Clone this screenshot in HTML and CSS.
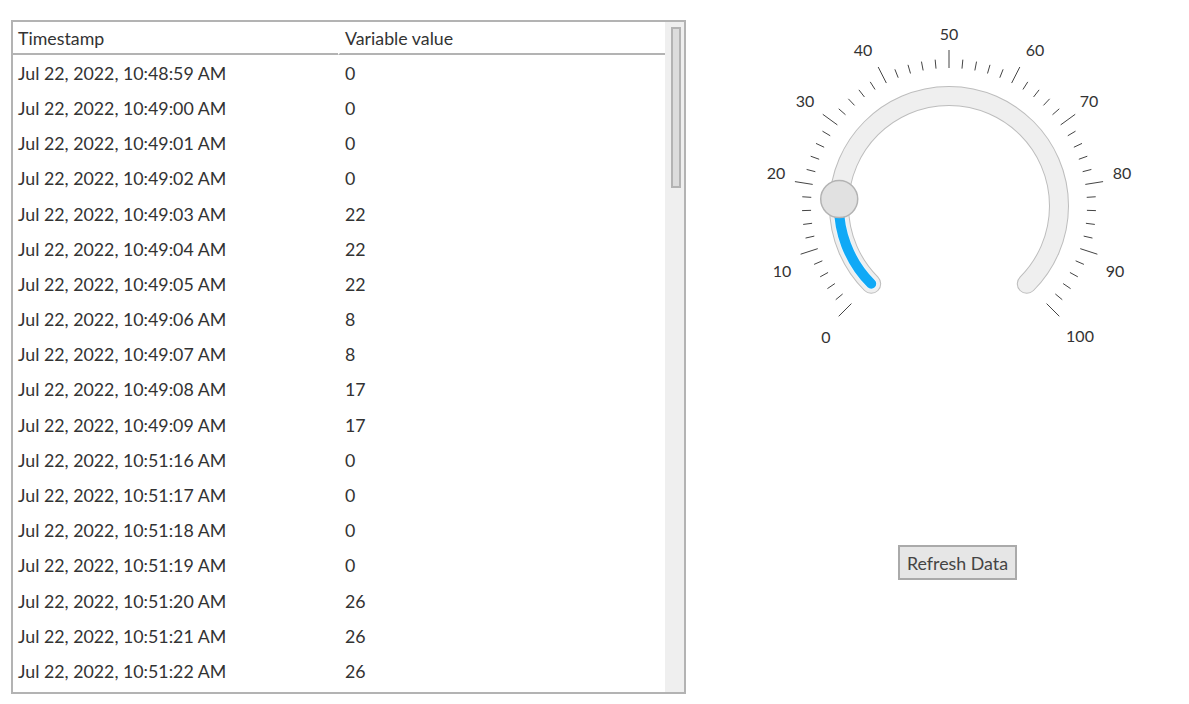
FILE: index.html
```html
<!DOCTYPE html>
<html lang="en">
<head>
    <meta charset="UTF-8">
    <meta name="viewport" content="width=device-width, initial-scale=1.0">
    <title>Variable monitor</title>
    <link rel="stylesheet" href="styles.css">
</head>
<body>
    <div class="page">
        <!-- history table -->
        <div class="table-panel">
            <div class="table-scroll">
                <table class="data-table">
                    <thead>
                        <tr>
                            <th class="col-time">Timestamp</th>
                            <th class="col-value">Variable value</th>
                        </tr>
                    </thead>
                    <tbody id="rows"></tbody>
                </table>
            </div>
            <!-- scrollbar -->
            <div class="scrollbar">
                <div class="scroll-thumb"></div>
            </div>
        </div>

        <!-- gauge + button -->
        <div class="gauge-panel">
            <svg class="gauge" id="gauge" width="400" height="340" viewBox="0 0 400 340"></svg>
            <button class="refresh-btn" type="button">Refresh Data</button>
        </div>
    </div>

    <script>
        (function() {
            // table data
            var rows = [
                ['10:48:59', 0], ['10:49:00', 0], ['10:49:01', 0], ['10:49:02', 0],
                ['10:49:03', 22], ['10:49:04', 22], ['10:49:05', 22], ['10:49:06', 8],
                ['10:49:07', 8], ['10:49:08', 17], ['10:49:09', 17], ['10:51:16', 0],
                ['10:51:17', 0], ['10:51:18', 0], ['10:51:19', 0], ['10:51:20', 26],
                ['10:51:21', 26], ['10:51:22', 26]
            ];

            var html = '';
            rows.forEach(function(row) {
                html += '<tr><td>Jul 22, 2022, ' + row[0] + ' AM</td><td>' + row[1] + '</td></tr>';
            });
            document.getElementById('rows').innerHTML = html;

            // gauge drawing
            var svg = document.getElementById('gauge');
            var cx = 200, cy = 186;
            var value = 18;
            // label positions (centre of text)
            var labels = {
                0: [77, 316], 10: [33, 250], 20: [27, 152], 30: [56, 80],
                40: [114, 29], 50: [200, 13], 60: [286, 29], 70: [340, 80],
                80: [373, 152], 90: [366, 250], 100: [331, 315]
            };

            function pt(r, v) {
                var a = (-135 + v * 2.7) * Math.PI / 180;
                return [cx + r * Math.sin(a), cy - r * Math.cos(a)];
            }
            function arc(r, from, to) {
                var p1 = pt(r, from), p2 = pt(r, to);
                var large = (to - from) * 2.7 > 180 ? 1 : 0;
                return 'M' + p1[0].toFixed(2) + ' ' + p1[1].toFixed(2) +
                       ' A' + r + ' ' + r + ' 0 ' + large + ' 1 ' + p2[0].toFixed(2) + ' ' + p2[1].toFixed(2);
            }

            var out = '';
            // ticks
            for (var v = 0; v <= 100; v += 2) {
                var major = v % 10 === 0;
                var a = pt(138, v), b = pt(major ? 156 : 147, v);
                out += '<line class="tick" x1="' + a[0] + '" y1="' + a[1] + '" x2="' + b[0] + '" y2="' + b[1] + '"/>';
                if (major) {
                    out += '<text class="tick-label" x="' + labels[v][0] + '" y="' + labels[v][1] + '">' + v + '</text>';
                }
            }
            // track
            var track = arc(110, 0, 100);
            out += '<path class="track-edge" d="' + track + '"/>';
            out += '<path class="track" d="' + track + '"/>';
            // value bar
            var bar = arc(110, 0, value);
            out += '<path class="bar-edge" d="' + bar + '"/>';
            out += '<path class="bar" d="' + bar + '"/>';
            // knob
            var k = pt(110, value);
            out += '<circle class="knob" cx="' + k[0] + '" cy="' + k[1] + '" r="18.5"/>';

            svg.innerHTML = out;
        })();
    </script>
</body>
</html>
```

FILE: styles.css
```css
* {
    margin: 0;
    padding: 0;
    box-sizing: border-box;
}
body {
    font-family: Lato, "Open Sans", sans-serif;
    font-size: 17.8px;
    line-height: 21.2px;
    color: #333;
    background: #fff;
}

.page {
    display: flex;
    align-items: flex-start;
    padding: 20px 0 0 11px;
}

/* table */
.table-panel {
    flex: 0 0 auto;
    display: flex;
    width: 675px;
    height: 674px;
    border: 2px solid #b3b3b3;
}
.table-scroll {
    flex: 1;
    overflow: hidden;
}
.scrollbar {
    flex: 0 0 19px;
    padding: 5px 3px 0 6px;
    background: #efefef;
}
.scroll-thumb {
    height: 161px;
    background: #dcdcdc;
    border: 2px solid #b3b3b3;
}
.data-table {
    width: 100%;
    border-collapse: separate;
    border-spacing: 0;
}
.data-table th {
    padding: 5.8px 5px 4.2px;
    font-weight: normal;
    text-align: left;
    border-bottom: 2px solid #b3b3b3;
}
.data-table .col-time {
    width: 325px;
}
.data-table .col-value {
    border-left: 2px solid #fff;
}
.data-table td {
    padding: 7.6px 5px 6.4px;
}
.data-table td + td {
    padding-left: 7px;
}

/* gauge */
.gauge-panel {
    display: flex;
    flex-direction: column;
    margin-left: 63px;
}
.gauge {
    display: block;
}
.tick {
    stroke: #444;
    stroke-width: 1;
}
.tick-label {
    font-family: Lato, sans-serif;
    font-size: 16px;
    fill: #333;
    text-anchor: middle;
    dominant-baseline: central;
}
.track-edge {
    fill: none;
    stroke: #bdbdbd;
    stroke-width: 20;
    stroke-linecap: round;
}
.track {
    fill: none;
    stroke: #efefef;
    stroke-width: 18;
    stroke-linecap: round;
}
.bar-edge {
    fill: none;
    stroke: #eaf6fd;
    stroke-width: 12;
    stroke-linecap: round;
}
.bar {
    fill: none;
    stroke: #10a9f6;
    stroke-width: 10;
    stroke-linecap: round;
}
.knob {
    fill: #e1e1e1;
    stroke: #b3b3b3;
    stroke-width: 1.5;
}

.refresh-btn {
    align-self: flex-start;
    margin: 185px 0 0 149px;
    width: 119px;
    height: 35px;
    font-family: Lato, sans-serif;
    font-size: 17.8px;
    color: #444;
    background: #e6e6e6;
    border: 2px solid #aaa;
    cursor: pointer;
}
```
